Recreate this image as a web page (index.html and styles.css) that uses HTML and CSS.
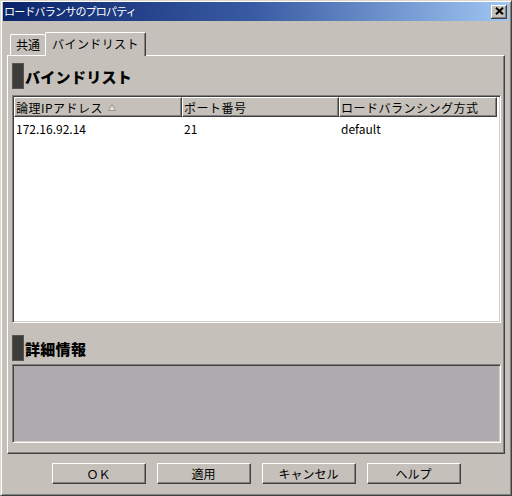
FILE: index.html
```html
<!DOCTYPE html>
<html lang="ja">
<head>
    <meta charset="UTF-8">
    <title>ロードバランサのプロパティ</title>
    <link rel="stylesheet" href="styles.css">
</head>
<body>
    <div class="window">
        <div class="titlebar">
            <span class="title">ロードバランサのプロパティ</span>
            <button class="close-btn" aria-label="閉じる">
                <svg width="9" height="8" viewBox="0 0 9 8">
                    <path d="M1 0.8 L8 7.2 M8 0.8 L1 7.2" stroke="#000" stroke-width="2" fill="none"/>
                </svg>
            </button>
        </div>

        <div class="tabs">
            <div class="tab">共通</div>
            <div class="tab active">バインドリスト</div>
        </div>

        <div class="panel">
            <div class="section-title">
                <span class="marker"></span>
                <span class="section-text">バインドリスト</span>
            </div>

            <div class="listview">
                <div class="list-header">
                    <div class="col col-ip">論理IPアドレス
                        <svg class="sort-icon" width="8" height="7" viewBox="0 0 8 7">
                            <polygon points="4,0.5 7.5,6.5 0.5,6.5" fill="#e4e1dc" stroke="#9a9792" stroke-width="1"/>
                        </svg>
                    </div>
                    <div class="col col-port">ポート番号</div>
                    <div class="col col-mode">ロードバランシング方式</div>
                </div>
                <div class="list-row">
                    <div class="cell col-ip">172.16.92.14</div>
                    <div class="cell col-port">21</div>
                    <div class="cell col-mode">default</div>
                </div>
            </div>

            <div class="section-title detail-title">
                <span class="marker"></span>
                <span class="section-text">詳細情報</span>
            </div>

            <div class="detail"></div>
        </div>

        <div class="buttons">
            <button class="btn btn-ok">ＯＫ</button>
            <button class="btn">適用</button>
            <button class="btn">キャンセル</button>
            <button class="btn">ヘルプ</button>
        </div>
    </div>
</body>
</html>
```

FILE: styles.css
```css
:root {
    --face: #c5c1ba;
    --light: #ffffff;
    --shadow: #808080;
    --dark: #404040;
    --detail-bg: #aeaaae;
}

* {
    margin: 0;
    padding: 0;
    box-sizing: border-box;
}

body {
    font-family: "Noto Sans CJK JP", "Liberation Sans", sans-serif;
    font-size: 12px;
    color: #000;
    background: var(--face);
}

.window {
    width: 512px;
    height: 496px;
    background: var(--face);
    border: 1px solid;
    border-color: #dcd8d0 var(--dark) var(--dark) #dcd8d0;
    box-shadow: inset 1px 1px var(--light), inset -1px -1px var(--shadow);
    padding: 1px 2px 2px 2px;
    display: flex;
    flex-direction: column;
}

/* title bar */
.titlebar {
    height: 19px;
    background: linear-gradient(to right, #0a246a 0%, #3a5ca4 50%, #a0c6f2 100%);
    display: flex;
    align-items: center;
    justify-content: space-between;
    padding: 0 2px 0 1px;
}

.title {
    color: #fff;
    font-size: 11px;
    letter-spacing: -0.8px;
    line-height: 19px;
}

.close-btn {
    width: 16px;
    height: 14px;
    border: none;
    background: var(--face);
    box-shadow: inset -1px -1px var(--dark), inset 1px 1px var(--light), inset -2px -2px var(--shadow);
    display: flex;
    align-items: center;
    justify-content: center;
    padding-bottom: 1px;
}

/* tabs */
.tabs {
    height: 23px;
    margin: 11px 4px 0 4px;
    padding-left: 3px;
    display: flex;
    align-items: flex-end;
    position: relative;
    z-index: 1;
}

.tab {
    height: 21px;
    width: 35px;
    border-top: 1px solid var(--light);
    border-left: 1px solid var(--light);
    border-radius: 2px 2px 0 0;
    background: var(--face);
    text-align: center;
    line-height: 19px;
}

.tab.active {
    width: 101px;
    height: 24px;
    margin-bottom: -1px;
    border-right: 1px solid var(--dark);
    box-shadow: inset -1px 0 var(--shadow);
    line-height: 21px;
    letter-spacing: 0.4px;
}

/* panel */
.panel {
    height: 399px;
    margin: 0 4px;
    border: 1px solid;
    border-color: var(--light) var(--dark) var(--dark) var(--light);
    box-shadow: inset -1px -1px var(--shadow);
    padding: 7px 3px 0 4px;
}

.section-title {
    height: 26px;
    display: flex;
    align-items: center;
}

.marker {
    width: 12px;
    height: 26px;
    background: #3c3d3b;
    border: 1px solid #555;
}

.section-text {
    margin-left: 1px;
    font-size: 15px;
    font-weight: 900;
    letter-spacing: 0.3px;
}

.detail-title {
    margin-top: 12px;
}

/* list view */
.listview {
    margin-top: 6px;
    height: 228px;
    background: #fff;
    border: 1px solid;
    border-color: var(--shadow) var(--light) var(--light) var(--shadow);
    box-shadow: inset 1px 1px var(--dark), inset -1px -1px #d4d0c8;
    padding: 1px;
}

.list-header {
    display: flex;
    height: 20px;
}

.list-header .col {
    height: 20px;
    background: var(--face);
    border-top: 1px solid var(--light);
    border-left: 1px solid var(--light);
    border-right: 1px solid var(--dark);
    border-bottom: 1px solid var(--dark);
    box-shadow: inset -1px -1px var(--shadow);
    padding-left: 1px;
    line-height: 17px;
    letter-spacing: 0.5px;
    display: flex;
    align-items: center;
}

.col-ip {
    width: 168px;
}

.col-port {
    width: 157px;
}

.col-mode {
    width: 158px;
}

.sort-icon {
    margin-left: 5px;
}

.list-row {
    display: flex;
    margin-top: 3px;
    height: 17px;
}

.list-row .cell {
    padding-left: 2px;
    line-height: 17px;
}

/* detail box */
.detail {
    margin-top: 3px;
    height: 79px;
    background: var(--detail-bg);
    border: 1px solid;
    border-color: var(--shadow) var(--light) var(--light) var(--shadow);
    box-shadow: inset 1px 1px var(--dark), inset -1px -1px #d4d0c8;
}

/* dialog buttons */
.buttons {
    margin-top: 9px;
    display: flex;
    justify-content: center;
    gap: 11px;
}

.btn {
    width: 94px;
    height: 21px;
    background: var(--face);
    border: 1px solid;
    border-color: var(--light) var(--dark) var(--dark) var(--light);
    box-shadow: inset -1px -1px var(--shadow);
    font-family: "Noto Sans CJK JP", "Liberation Sans", sans-serif;
    font-size: 12px;
    color: #000;
    line-height: 18px;
}
```
